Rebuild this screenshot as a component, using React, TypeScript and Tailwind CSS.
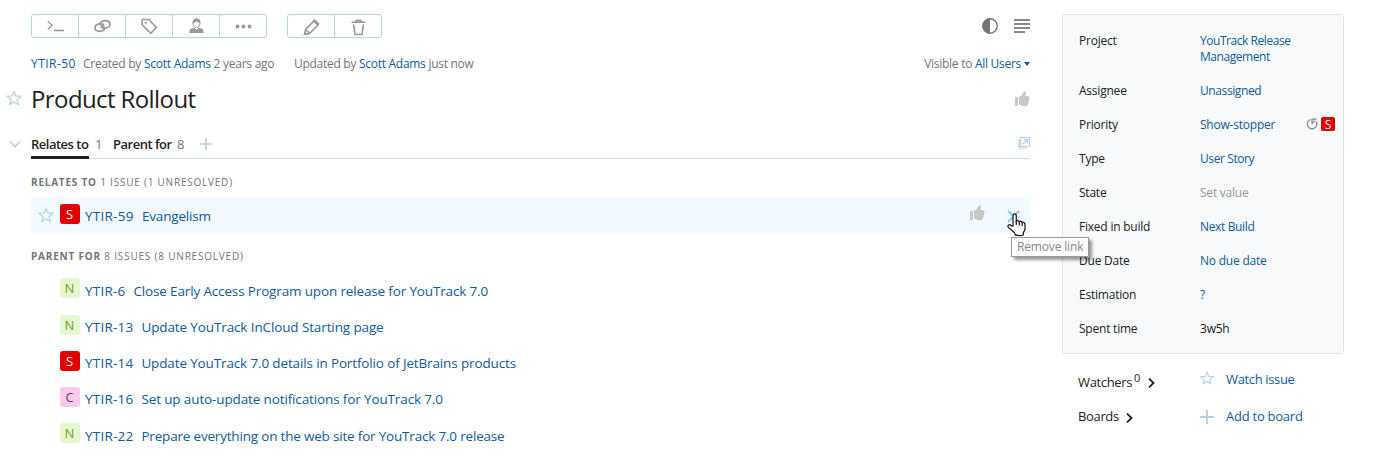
import React from "react";

const STAR = "M8 1.5 L9.9 6 L14.8 6.4 L11.1 9.6 L12.2 14.4 L8 11.9 L3.8 14.4 L4.9 9.6 L1.2 6.4 L6.1 6 Z";

function Star({ className }: { className: string }) {
  return (
    <svg viewBox="0 0 16 16" className={className} fill="none" stroke="#b8d1e5" strokeWidth="1.3">
      <path d={STAR} />
    </svg>
  );
}

function Plus({ className }: { className: string }) {
  return (
    <svg viewBox="0 0 14 14" className={className} fill="#b8d1e5">
      <path d="M6 0h2v6h6v2H8v6H6V8H0V6h6z" />
    </svg>
  );
}

function Thumb({ className }: { className: string }) {
  return (
    <svg viewBox="0 0 15 16" className={className} fill="#c8c8c8">
      <path d="M0 6h3v9H0zM4 6.2L7.3 3.6 8.8.6Q9.6-.3 10.6.6q.9 1.6-.3 4.4h2.6Q14.6 5.4 14.6 7q-.4 4-2 7-.6 1.4-2.2 1.4Q7 15.4 4 13.6z" />
    </svg>
  );
}

const badgeStyles: Record<string, string> = {
  S: "bg-[#e30000] text-white",
  N: "bg-[#e6f6cf] text-[#6aa32c]",
  C: "bg-[#ffc8ea] text-[#4f4b63]",
};

function Badge({ kind }: { kind: string }) {
  return (
    <span className={"flex h-5 w-5 shrink-0 justify-center rounded-[3px] pr-px text-[13px] leading-[21px] " + badgeStyles[kind]}>
      {kind}
    </span>
  );
}

function ToolButton({ children, last }: { children: React.ReactNode; last?: boolean }) {
  return (
    <button className={"flex h-[22px] items-center justify-center " + (last ? "w-[46px]" : "w-[47px] border-r border-[#b8d1e5]")}>
      {children}
    </button>
  );
}

const issues = [
  { kind: "N", id: "YTIR-6", title: "Close Early Access Program upon release for YouTrack 7.0", track: "tracking-[-0.150px]", row: "h-[37px] leading-[27px]" },
  { kind: "N", id: "YTIR-13", title: "Update YouTrack InCloud Starting page", track: "tracking-[-0.120px]", row: "h-[36px] leading-[25px]" },
  { kind: "S", id: "YTIR-14", title: "Update YouTrack 7.0 details in Portfolio of JetBrains products", track: "tracking-[-0.140px]", row: "h-[36px] leading-[25px]" },
  { kind: "C", id: "YTIR-16", title: "Set up auto-update notifications for YouTrack 7.0", track: "tracking-[-0.130px]", row: "h-[36px] leading-[25px]" },
  { kind: "N", id: "YTIR-22", title: "Prepare everything on the web site for YouTrack 7.0 release", track: "tracking-[-0.190px]", row: "h-[32px] leading-[27px]" },
];

const fields = [
  { name: "Project", value: "YouTrack Release Management", color: "text-[#0f5b99] tracking-[-0.450px]" },
  { name: "Assignee", value: "Unassigned", color: "text-[#0f5b99] tracking-[-0.400px]" },
  { name: "Priority", value: "Show-stopper", color: "text-[#0f5b99]" },
  { name: "Type", value: "User Story", color: "text-[#0f5b99] tracking-[-0.400px]" },
  { name: "State", value: "Set value", color: "text-[#999999]" },
  { name: "Fixed in build", value: "Next Build", color: "text-[#0f5b99] tracking-[-0.350px]" },
  { name: "Due Date", value: "No due date", color: "text-[#0f5b99]" },
  { name: "Estimation", value: "?", color: "text-[#0f5b99]" },
  { name: "Spent time", value: "3w5h", color: "text-[#222222]" },
];

export default function App() {
  return (
    <div className="flex h-[455px] w-[1375px] overflow-hidden whitespace-nowrap bg-white font-['Open_Sans','Noto_Sans',sans-serif] text-[#222222]">
      <div className="flex w-[31px] shrink-0 flex-col">
        <Star className="ml-[6px] mt-[90px] h-4 w-4" />
        <svg viewBox="0 0 12 8" className="ml-[9px] mt-[34px] h-2 w-3" fill="none" stroke="#b8d1e5" strokeWidth="1.7">
          <path d="M1 1.5l5 5 5-5" />
        </svg>
      </div>

      <main className="flex w-[999px] shrink-0 flex-col pt-[14px]">
        <div className="flex h-6 shrink-0 justify-between">
          <div className="flex gap-5">
            <div className="flex rounded-[3px] border border-[#b8d1e5]">
              <ToolButton>
                <svg width="17" height="12" viewBox="0 0 17 12" fill="none" stroke="#999" strokeWidth="1.3">
                  <path d="M.7 1L5 5.2.7 9.5" />
                  <path d="M7 10.5h10" strokeWidth="1.6" />
                </svg>
              </ToolButton>
              <ToolButton>
                <svg width="17" height="14" viewBox="0 0 17 14" fill="none" stroke="#999" strokeWidth="1.7">
                  <path d="M11.3 8.300Q10.200 12.300 6 12.300 1 12.300 1 8.800 1.200 5.200 5.600 4.900q4.200.100 4.200 2.400-.400 1.500-2.600 1.700" />
                  <path d="M5.700 5.700Q6.800 1.700 11 1.700q5 0 5 3.500-.200 3.600-4.600 3.900-4.200-.100-4.200-2.400.400-1.500 2.600-1.700" />
                </svg>
              </ToolButton>
              <ToolButton>
                <svg width="17" height="17" viewBox="0 0 17 17" fill="none" stroke="#999" strokeWidth="1.6">
                  <path d="M1.200 1.500h6.500l7.700 8-5.600 5.800-8.600-8.300z" />
                  <circle cx="4.700" cy="4.800" r="1.100" fill="#999" stroke="none" />
                </svg>
              </ToolButton>
              <ToolButton>
                <svg width="15" height="16" viewBox="0 0 15 16" fill="#999">
                  <path d="M.5 15v-2.200Q.8 10.700 5 9.800L7.500 11.500 10 9.800q4.200.900 4.500 3V15z" />
                  <path d="M4 4.500Q4 1 7.500 1T11 4.500Q11 9.500 7.500 9.500T4 4.500z" fill="#fff" stroke="#999" />
                  <path d="M3.700 5Q3.200.500 7.500.500T11.300 5Q9 5 8 3.200 6.500 5 3.700 5z" />
                </svg>
              </ToolButton>
              <ToolButton last>
                <svg width="17" height="5" viewBox="0 0 17 5" fill="#999">
                  <circle cx="2.500" cy="2.500" r="1.900" />
                  <circle cx="8.500" cy="2.500" r="1.900" />
                  <circle cx="14.500" cy="2.500" r="1.900" />
                </svg>
              </ToolButton>
            </div>
            <div className="flex rounded-[3px] border border-[#b8d1e5]">
              <ToolButton>
                <svg width="17" height="17" viewBox="0 0 17 17" className="mt-[3px]" fill="none" stroke="#999" strokeWidth="1.600">
                  <path d="M1.500 15.500l1.200-5L11 2l4 4-8.300 8.300z" />
                  <path d="M2.700 10.500l3.900 3.900" />
                  <path d="M9.800 1.800L12 .600l4 4-1.200 2.200z" fill="#999" strokeWidth=".6" />
                  <path d="M1 16l1-3.500 2.500 2.500z" fill="#999" stroke="none" />
                </svg>
              </ToolButton>
              <ToolButton last>
                <svg width="15" height="17" viewBox="0 0 15 17" className="mt-[3px]" fill="none" stroke="#999" strokeWidth="1.600">
                  <path d="M.5 3.300h14M5 2.800V1.500h5v1.300M2.500 5.300L4 15.500h7l1.500-10.200" />
                </svg>
              </ToolButton>
            </div>
          </div>
          <div className="flex gap-4 pt-1">
            <svg width="16" height="16" viewBox="0 0 16 16">
              <circle cx="8" cy="8" r="7.200" fill="#fff" stroke="#737577" strokeWidth="1.400" />
              <path d="M8 .5a7.500 7.500 0 000 15z" fill="#737577" />
            </svg>
            <svg width="16" height="16" viewBox="0 0 16 16" fill="#888">
              <path d="M0 1h16v2H0zM0 5h16v2H0zM0 9h16v2H0zM0 13h11v2H0z" />
            </svg>
          </div>
        </div>

        <div className="mt-[18px] flex h-4 shrink-0 text-[12px] leading-4 text-[#737577]">
          <span className="w-[52px] tracking-[0.450px] text-[#0f5b99]">YTIR-50</span>
          <span className="w-[211px] tracking-[-0.260px]">Created by <a className="text-[#0f5b99]">Scott Adams</a> 2 years ago</span>
          <span className="tracking-[-0.280px]">Updated by <a className="text-[#0f5b99]">Scott Adams</a> just now</span>
          <span className="ml-auto flex items-center tracking-[-0.280px]">
            <span>Visible to <a className="text-[#0f5b99]">All Users</a></span>
            <svg width="6" height="4" viewBox="0 0 6 4" className="ml-[3px]" fill="#0f5b99"><path d="M0 0h6L3 4z" /></svg>
          </span>
        </div>

        <div className="mt-[10px] flex h-8 shrink-0 justify-between">
          <h1 className="text-[24px] leading-[33px] tracking-[-0.6px]">Product Rollout</h1>
          <Thumb className="mt-[9px] h-4 w-[15px]" />
        </div>

        <div className="mt-[16px] flex h-[29px] shrink-0 border-b border-[#cbdde9] text-[13px] leading-[29px]">
          <span className="-mb-px w-[58px] border-b-[3px] border-[#222222] font-semibold tracking-[-0.5px]">Relates to</span>
          <span className="ml-[6px] w-[18px] text-[#737577]">1</span>
          <span className="w-[64px] font-semibold tracking-[-0.5px]">Parent for</span>
          <span className="w-[23px] text-[#737577]">8</span>
          <Plus className="mt-2 h-3 w-3" />
          <svg width="12" height="12" viewBox="0 0 12 12" className="ml-auto mt-[7px]" fill="none" stroke="#b8d1e5">
            <path d="M2.500.500h9v9h-9zM1 2.500v8.500h8.500M4.500 7.500l4.500-4.500M5.500 2.500h4v4" strokeWidth="1.200" />
          </svg>
        </div>

        <div className="mt-[15px] h-4 shrink-0 text-[10px] leading-4 tracking-[0.780px] text-[#737577]">
          <b>RELATES TO</b> 1 ISSUE (1 UNRESOLVED)
        </div>

        <div className="mt-[7px] flex h-9 shrink-0 bg-[#f2f9ff] pt-[7px] text-[13.500px] text-[#0f5b99]">
          <Star className="ml-[7px] mr-[6px] mt-[3px] h-4 w-4" />
          <Badge kind="S" />
          <span className="ml-[5px] w-[57px] leading-[25px] tracking-[0.250px]">YTIR-59</span>
          <span className="leading-[25px] tracking-[-0.190px]">Evangelism</span>
          <Thumb className="ml-auto mr-[22px] mt-[1px] h-4 w-[15px]" />
          <div className="relative h-5 w-[23px]">
            <svg width="13" height="13" viewBox="0 0 13 13" className="mt-[6px]" fill="none" stroke="#80c4fa" strokeWidth="1.800">
              <path d="M1 1l11 11M12 1L1 12" />
            </svg>
            <svg width="19" height="24" viewBox="0 0 19 24" className="absolute left-0 top-[9px]" fill="#fff" stroke="#222" strokeWidth="1.300">
              <path d="M6 13V2.600Q6.200 1 7.700 1T9.300 2.600V8q1.300-1.100 3 .600 1.300-.900 2.800.600 2.600-.300 2.900 2.200v4.500q-.300 2-1.700 3.700V22q-3 1.200-8 0l-1-2.500L1.500 14.500Q.300 12.800 1.500 12t2.800.800z" />
              <path d="M9.300 8v4M12.300 9v3.500M15.200 9.500v3.500" fill="none" />
            </svg>
            <div className="absolute left-[4px] top-[33px] h-5 w-[78px] border border-[#999] bg-white pl-[5px] text-[12px] leading-[18px] tracking-[-0.160px] text-[#888] shadow-[3px_3px_3px_rgba(0,0,0,0.4)]">
              Remove link
            </div>
          </div>
        </div>

        <div className="mt-[15px] h-4 shrink-0 text-[10px] leading-4 tracking-[0.800px] text-[#737577]">
          <b>PARENT FOR</b> 8 ISSUES (8 UNRESOLVED)
        </div>

        <div className="mt-[14px] flex shrink-0 flex-col pl-[29px] text-[13.500px] text-[#0f5b99]">
          {issues.map((it) => (
            <div key={it.id} className={"flex " + it.row}>
              <Badge kind={it.kind} />
              <span className="ml-[5px] mr-[8px] tracking-[0.220px]">{it.id}</span>
              <span className={it.track}>{it.title}</span>
            </div>
          ))}
        </div>
      </main>

      <aside className="ml-[32px] flex w-[282px] shrink-0 flex-col pt-[14px]">
        <div className="flex h-[340px] shrink-0 flex-col gap-[18px] rounded-[3px] border border-[#dfe5eb] bg-[#f7f9fa] pl-4 pt-[18px] text-[12px] leading-4 tracking-[-0.220px]">
          {fields.map((f) => (
            <div key={f.name} className="flex">
              <span className="w-[121px]">{f.name}</span>
              <span className={"w-[106px] whitespace-normal " + f.color}>{f.value}</span>
              {f.name === "Priority" && (
                <span className="flex h-4 items-center">
                  <svg width="12" height="12" viewBox="0 0 12 12" className="-mt-[2px]" fill="none" stroke="#888" strokeWidth="1.200">
                    <path d="M4.500 1.500A4.800 4.800 0 1 0 9.800 3M6 6V1.200h4.500M6 6l2.500-3.500" />
                  </svg>
                  <span className="-mt-[2px] ml-[3px] h-[14px] w-[14px] rounded-[2px] bg-[#e30000] text-center text-[12px] leading-[15px] text-white">S</span>
                </span>
              )}
            </div>
          ))}
        </div>
        <div className="mt-[15px] flex h-[37px] pl-4 text-[13px] leading-5 tracking-[-0.350px]">
          <span className="flex w-[122px] pt-[3px]">
            Watchers
            <span className="-mt-[4px] ml-[2px] text-[11px]">0</span>
            <svg width="7" height="10" viewBox="0 0 7 10" className="ml-[8px] mt-[6px]" fill="none" stroke="#222" strokeWidth="1.800"><path d="M1 .700L5.500 5 1 9.300" /></svg>
          </span>
          <Star className="mt-[2px] h-[14px] w-[14px]" />
          <span className="ml-[12px] text-[#0f5b99]">Watch issue</span>
        </div>
        <div className="flex h-5 pl-4 text-[13px] leading-5 tracking-[-0.350px]">
          <span className="flex w-[122px]">
            Boards
            <svg width="7" height="10" viewBox="0 0 7 10" className="ml-[7px] mt-[7px]" fill="none" stroke="#222" strokeWidth="1.800"><path d="M1 .700L5.500 5 1 9.300" /></svg>
          </span>
          <Plus className="mt-[4px] h-[14px] w-[14px]" />
          <span className="ml-[12px] tracking-[-0.250px] text-[#0f5b99]">Add to board</span>
        </div>
      </aside>
    </div>
  );
}
